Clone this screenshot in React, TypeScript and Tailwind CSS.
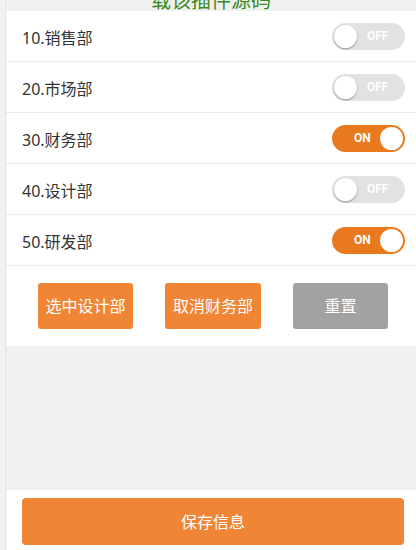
import React, { useState } from "react";

const font = { fontFamily: '"Noto Sans", "Noto Sans CJK SC", sans-serif' };

function Toggle({ on, onClick }: { on: boolean; onClick: () => void }) {
  return (
    <button
      onClick={onClick}
      className={`relative flex h-[27px] w-[73px] items-center rounded-full ${
        on ? "bg-[#e8791d]" : "bg-[#e2e2e2]"
      }`}
    >
      {on ? (
        <>
          <span className="ml-[22px] text-[12px] font-bold text-white" style={{ fontFamily: "Roboto, sans-serif" }}>
            ON
          </span>
          <span className="ml-auto mr-[2px] h-[23px] w-[23px] rounded-full bg-white" />
        </>
      ) : (
        <>
          <span className="ml-[2px] h-[23px] w-[23px] rounded-full bg-white shadow-[0_1px_2px_rgba(0,0,0,0.35)]" />
          <span className="ml-[10px] text-[12px] font-bold text-white" style={{ fontFamily: "Roboto, sans-serif" }}>
            OFF
          </span>
        </>
      )}
    </button>
  );
}

export default function App() {
  const [items, setItems] = useState([
    { name: "10.销售部", on: false },
    { name: "20.市场部", on: false },
    { name: "30.财务部", on: true },
    { name: "40.设计部", on: false },
    { name: "50.研发部", on: true },
  ]);

  const toggle = (i: number) =>
    setItems((prev) => prev.map((it, j) => (j === i ? { ...it, on: !it.on } : it)));

  return (
    <div className="flex h-[550px] w-[416px] overflow-hidden bg-[#f0f0f0]" style={font}>
      <div className="w-[6px] shrink-0 border-r border-[#e4e4e4] bg-[#f2f2f2]" />
      <div className="flex min-w-0 flex-1 flex-col">
        <div className="flex h-[11px] items-end justify-center overflow-hidden">
          <span className="text-[20px] leading-[20px] text-[#3b8a1c]">载该插件源码</span>
        </div>
        <div className="bg-white">
          {items.map((it, i) => (
            <div
              key={it.name}
              className="flex h-[51px] items-center justify-between border-b border-[#ececec] pl-[16px] pr-[11px]"
            >
              <span className="pt-[4px] text-[16px] text-[#333333]">{it.name}</span>
              <Toggle on={it.on} onClick={() => toggle(i)} />
            </div>
          ))}
          <div className="flex h-[80px] items-center gap-[32px] pl-[32px]">
            <button className="h-[46px] w-[95px] rounded-[3px] bg-[#ef8535] text-[16px] text-white">
              选中设计部
            </button>
            <button className="h-[46px] w-[96px] rounded-[3px] bg-[#ef8535] text-[16px] text-white">
              取消财务部
            </button>
            <button className="h-[46px] w-[95px] rounded-[3px] bg-[#a2a2a2] text-[16px] text-white">
              重置
            </button>
          </div>
        </div>
        <div className="flex-1" />
        <div className="flex h-[60px] items-start bg-white pl-[16px] pr-[12px] pt-[8px]">
          <button className="h-[47px] w-full rounded-[4px] bg-[#ef8535] text-[16px] text-white">
            保存信息
          </button>
        </div>
      </div>
    </div>
  );
}
